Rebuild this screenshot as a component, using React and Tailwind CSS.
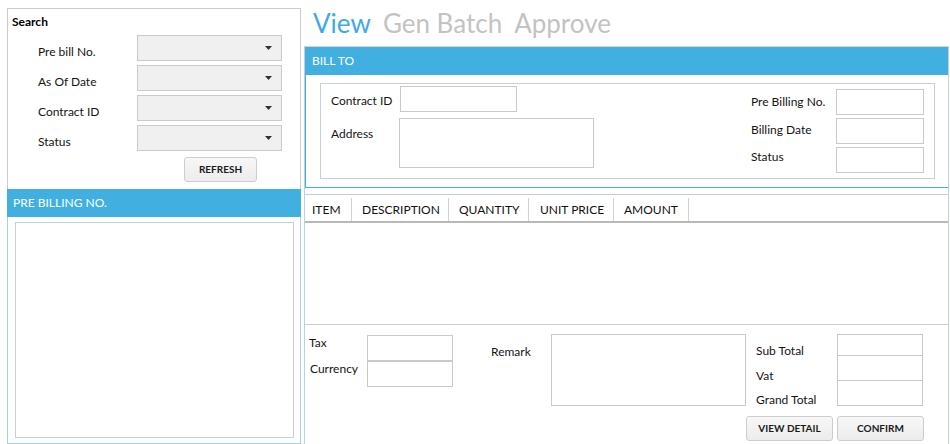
import React from "react";

// Billing form — search panel on the left, bill detail on the right.

function Arrow() {
  return (
    <svg width="7" height="4" viewBox="0 0 7 4">
      <path d="M0 0h7L3.5 4z" fill="#333" />
    </svg>
  );
}

function Select() {
  return (
    <div className="flex h-[26px] w-[145px] items-center justify-end border border-[#cacaca] bg-[#f0f0f0] pr-[9px]">
      <Arrow />
    </div>
  );
}

function Box({ className = "" }) {
  return <div className={`border border-[#c9c9c9] bg-white ${className}`} />;
}

function Btn({ children, className = "" }) {
  return (
    <div
      className={`flex h-[25px] items-center justify-center rounded-[3px] border border-[#cdcdcd] bg-gradient-to-b from-[#f7f7f7] to-[#ececec] text-[10px] font-bold text-[#1a1a1a] ${className}`}
    >
      {children}
    </div>
  );
}

const searchRows = ["Pre bill No.", "As Of Date", "Contract ID", "Status"];
const columns = [
  { label: "ITEM", w: "w-[47px] pl-[7px]" },
  { label: "DESCRIPTION", w: "w-[97px] pl-[10px]" },
  { label: "QUANTITY", w: "w-[80px] pl-[10px]" },
  { label: "UNIT PRICE", w: "w-[85px] pl-[11px]" },
  { label: "AMOUNT", w: "w-[75px] pl-[10px]" },
];

export default function App() {
  return (
    <div className="flex h-[444px] w-[950px] items-start overflow-hidden bg-white pl-[7px] font-['Lato',sans-serif] text-[12px] text-[#141414]">
      {/* ── Left: search + list ─────────────────────────────── */}
      <div className="mt-[8px] flex h-[436px] w-[294px] flex-col">
        <div className="h-[181px] border-x border-t border-[#cbcbcb]">
          <div className="pl-[4px] pt-[5px] text-[12px] font-bold leading-[16px] text-black">Search</div>
          <div className="mt-[5px] flex flex-col gap-[4px]">
            {searchRows.map((l) => (
              <div key={l} className="flex h-[26px] items-start pl-[30px]">
                <span className="w-[99px] pt-[9px] leading-[16px]">{l}</span>
                <Select />
              </div>
            ))}
          </div>
          <Btn className="ml-[176px] mt-[6px] w-[73px]">REFRESH</Btn>
        </div>
        <div className="flex h-[28px] items-center bg-[#42afe1] pl-[6px] text-[12px] text-white">PRE BILLING NO.</div>
        <div className="flex flex-1 border-x border-b border-[#9fd4ec] pb-[5px] pl-[7px] pr-[6px] pt-[5px]">
          <div className="flex-1 border border-[#c6d0da] bg-white" />
        </div>
      </div>

      {/* ── Right: bill detail ──────────────────────────────── */}
      <div className="ml-[3px] flex h-[444px] w-[645px] flex-col">
        <div className="flex h-[46px] gap-[12px] pl-[9px] pt-[7px] text-[26px] leading-[32px]">
          <span className="text-[#41a9e3]">View</span>
          <span className="text-[#c3c3c3]">Gen Batch</span>
          <span className="text-[#c3c3c3]">Approve</span>
        </div>

        <div className="flex flex-1 flex-col border-x border-[#bfcfdc]">
          {/* BILL TO */}
          <div className="border-t border-[#d3d3d3]">
            <div className="flex h-[28px] items-center bg-[#42afe1] pl-[7px] text-[12px] text-white">BILL TO</div>
            <div className="border-b border-l border-[#42afe1] py-[8px] pl-[14px] pr-[13px]">
              <div className="flex h-[96px] justify-between border border-[#c6d0da]">
                <div className="flex flex-col pl-[10px]">
                  <div className="flex items-start">
                    <span className="w-[69px] pt-[9px] leading-[16px]">Contract ID</span>
                    <Box className="mt-[2px] h-[26px] w-[117px]" />
                  </div>
                  <div className="mt-[6px] flex items-start">
                    <span className="w-[68px] pt-[8px] leading-[16px]">Address</span>
                    <Box className="h-[50px] w-[195px]" />
                  </div>
                </div>
                <div className="flex flex-col gap-[3px] pr-[10px] pt-[5px]">
                  {[
                    ["Pre Billing No.", "pt-[5px]"],
                    ["Billing Date", "pt-[4px]"],
                    ["Status", "pt-[2px]"],
                  ].map(([l, p]) => (
                    <div key={l} className="flex items-start">
                      <span className={`w-[85px] leading-[16px] ${p}`}>{l}</span>
                      <Box className="h-[26px] w-[88px]" />
                    </div>
                  ))}
                </div>
              </div>
            </div>
          </div>

          {/* Items grid */}
          <div className="mt-[6px] flex flex-1 flex-col border-t border-[#c5cfd9]">
            <div className="flex h-[28px] border-b-2 border-[#b9b9b9]">
              {columns.map((c) => (
                <div
                  key={c.label}
                  className={`mt-[3px] flex h-[23px] items-center border-r border-[#d2d2d2] text-[12px] text-[#111] ${c.w}`}
                >
                  {c.label}
                </div>
              ))}
            </div>
            <div className="h-[102px] border-b border-[#c5cfd9]" />

            {/* Totals */}
            <div className="flex flex-1 items-start pt-[9px]">
              <div className="ml-[4px] flex flex-col pt-[1px]">
                <div className="flex items-start">
                  <span className="w-[58px] leading-[16px]">Tax</span>
                  <Box className="h-[26px] w-[86px]" />
                </div>
                <div className="flex items-start">
                  <span className="w-[58px] pl-[1px] leading-[16px]">Currency</span>
                  <Box className="h-[26px] w-[86px]" />
                </div>
              </div>
              <span className="ml-[38px] mt-[10px] w-[60px] leading-[16px]">Remark</span>
              <Box className="h-[72px] w-[195px]" />
              <div className="flex flex-col">
                <div className="flex">
                  <div className="flex w-[91px] flex-col pl-[10px] pt-[9px] leading-[16px]">
                    <span className="mb-[9px]">Sub Total</span>
                    <span className="mb-[8px]">Vat</span>
                    <span>Grand Total</span>
                  </div>
                  <div className="flex w-[86px] flex-col">
                    <Box className="h-[22px]" />
                    <Box className="-mt-px h-[26px]" />
                    <Box className="-mt-px h-[26px]" />
                  </div>
                </div>
                <div className="mt-[8px] flex gap-[4px]">
                  <Btn className="w-[87px]">VIEW DETAIL</Btn>
                  <Btn className="w-[87px]">CONFIRM</Btn>
                </div>
              </div>
            </div>
          </div>
        </div>
      </div>
    </div>
  );
}
